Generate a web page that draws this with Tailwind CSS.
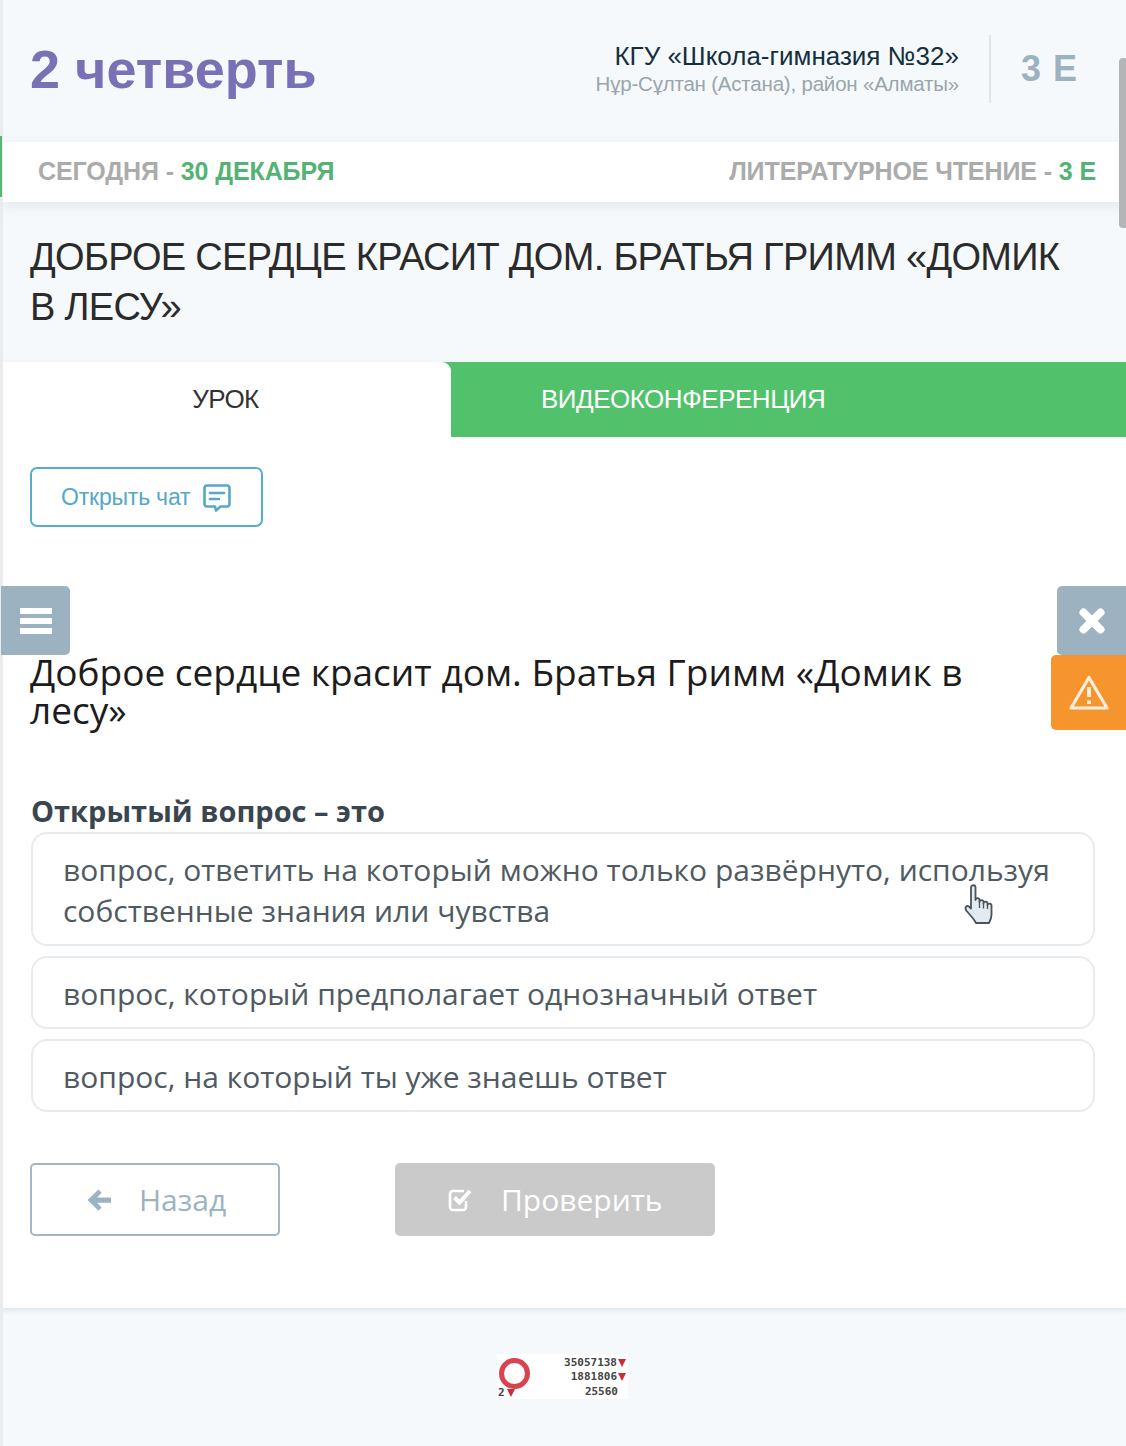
<!DOCTYPE html>
<html lang="ru">
<head>
  <meta charset="UTF-8">
  <meta name="viewport" content="width=device-width, initial-scale=1">
  <title>2 четверть</title>
  <script src="https://cdn.jsdelivr.net/npm/@tailwindcss/browser@4"></script>
</head>

<body class="bg-[#f5f9fc]">
  <div class="relative w-[1126px] h-[1446px] overflow-hidden bg-[#f5f9fc] font-['Liberation_Sans',sans-serif]">
    <!-- left edge of the page -->
    <div class="absolute left-0 top-0 bottom-0 w-[3px] bg-[#e9ebed] z-10"></div>

    <!-- header -->
    <header class="h-[142px] flex items-center justify-between pl-[30px] pr-[48px]">
      <h1 class="text-[54px] font-bold text-[#7a70b6] leading-none -mt-[4px]">2 четверть</h1>
      <div class="flex items-center -mt-[4px]">
        <div class="text-right">
          <div class="text-[26px] leading-[30px] text-[#14303c]">КГУ «Школа-гимназия №32»</div>
          <div class="text-[20.5px] leading-[26px] text-[#9aa5ab] tracking-[-0.2px]">Нұр-Сұлтан (Астана), район «Алматы»</div>
        </div>
        <div class="w-[2px] h-[68px] bg-[#dfe5e9] mx-[30px]"></div>
        <div class="text-[36px] font-bold text-[#9db2c1] tracking-[1px] pr-0">3 Е</div>
      </div>
    </header>

    <!-- date bar -->
    <div class="relative h-[60px] bg-white flex items-center justify-between pl-[38px] pr-[30px] text-[25px] font-bold text-[#ababab] shadow-[0_4px_12px_rgba(120,140,150,0.15)] tracking-[-0.1px]">
      <div class="absolute left-0 -top-[6px] h-[61px] w-[2px] bg-[#54b872] z-20"></div>
      <div>СЕГОДНЯ - <span class="text-[#54b374]">30 ДЕКАБРЯ</span></div>
      <div>ЛИТЕРАТУРНОЕ ЧТЕНИЕ - <span class="text-[#54b374]">3 Е</span></div>
    </div>

    <!-- lesson title -->
    <div class="h-[160px] pl-[30px] pr-[40px] pt-[30px]">
      <h2 class="text-[38px] leading-[50px] text-[#2b2b2b] tracking-[-0.7px]">ДОБРОЕ СЕРДЦЕ КРАСИТ ДОМ. БРАТЬЯ ГРИММ «ДОМИК В ЛЕСУ»</h2>
    </div>

    <!-- lesson card -->
    <main class="h-[946px] bg-white shadow-[0_2px_6px_rgba(120,140,150,0.2)]">
      <div class="flex h-[75px] bg-[#52c16c]">
        <div class="w-[451px] bg-white rounded-tr-[9px] flex items-center justify-center text-[26px] text-[#333] tracking-[-0.6px]">УРОК</div>
        <div class="flex-1 flex items-center pl-[90px] text-[26px] text-white tracking-[-0.5px]">ВИДЕОКОНФЕРЕНЦИЯ</div>
      </div>

      <div class="pl-[30px] pt-[30px]">
        <button class="w-[233px] h-[60px] border-2 border-[#57aecb] rounded-[7px] flex items-center pl-[29px] text-[23px] text-[#55a8c6] tracking-[-0.2px]">
          Открыть чат
          <svg class="ml-[12px] mt-[1px]" width="30" height="30" viewBox="0 0 30 30" fill="none" stroke="#55a8c6" stroke-width="2.6" stroke-linejoin="round" stroke-linecap="round">
            <path d="M5 2.5h20a2.5 2.5 0 0 1 2.5 2.5v16a2.5 2.5 0 0 1-2.5 2.5h-6.5l-4.5 4-1-4H5A2.5 2.5 0 0 1 2.5 21V5A2.5 2.5 0 0 1 5 2.5z"/>
            <path d="M8 10h14M8 16h9"/>
          </svg>
        </button>
      </div>

      <div class="font-['Open_Sans',sans-serif] pl-[30px] pr-[31px]">
        <h3 class="mt-[126px] text-[37px] leading-[38px] text-[#1c1c1c] pr-[60px]">Доброе сердце красит дом. Братья Гримм «Домик в лесу»</h3>
        <p class="mt-[62px] text-[29px] leading-[40px] font-bold text-[#3a4550] pl-[1px]">Открытый вопрос – это</p>

        <div class="mt-[1px] flex flex-col gap-[10px] pl-[1px] text-[30px] text-[#4f5a63] leading-[41px]">
          <div class="h-[114px] border-2 border-[#e8ebee] rounded-[16px] pl-[30px] pr-[30px] pt-[15px]">вопрос, ответить на который можно только развёрнуто, используя собственные знания или чувства</div>
          <div class="h-[73px] border-2 border-[#e8ebee] rounded-[16px] pl-[30px] pt-[15px]">вопрос, который предполагает однозначный ответ</div>
          <div class="h-[73px] border-2 border-[#e8ebee] rounded-[16px] pl-[30px] pt-[15px]">вопрос, на который ты уже знаешь ответ</div>
        </div>

        <div class="mt-[51px] flex text-[30px]">
          <button class="w-[250px] h-[73px] border-2 border-[#a3b6c3] rounded-[5px] flex items-center pl-[54px] text-[#9db3c1]">
            <svg width="26" height="24" viewBox="0 0 26 24" fill="#9db3c1"><path d="M12.5 1.5l3.2 3.2-4.6 4.8H25v5.2H11.1l4.6 4.8-3.2 3.2L1.5 12z"/></svg>
            <span class="ml-[27px]">Назад</span>
          </button>
          <button class="ml-[115px] w-[320px] h-[73px] bg-[#cacaca] rounded-[5px] flex items-center pl-[52px] text-white">
            <svg width="26" height="26" viewBox="0 0 26 26" fill="none" stroke="#fff" stroke-width="2.6"><path d="M19 14v6a3 3 0 0 1-3 3H6a3 3 0 0 1-3-3V7a3 3 0 0 1 3-3h11"/><path stroke-width="4" d="M7.5 10.5l5 5L23 4"/></svg>
            <span class="ml-[28px]">Проверить</span>
          </button>
        </div>
      </div>
    </main>

    <!-- counter -->
    <div class="flex justify-center mt-[46px] pr-[1px]">
      <div class="relative w-[131px] h-[45px] bg-white font-['DejaVu_Sans_Mono',monospace] text-[11px] leading-[15px] font-bold text-[#444]">
        <div class="absolute left-[2px] top-[4px] w-[31px] h-[31px] rounded-full border-[5px] border-[#d8434f]"></div>
        <div class="absolute left-[1px] bottom-[1px] flex items-center leading-none">2<span class="ml-[2px] w-0 h-0 border-x-[4px] border-x-transparent border-t-[8px] border-t-[#c92d3a]"></span></div>
        <div class="absolute right-[2px] top-[1px] flex items-center justify-end h-[15px]">35057138<span class="ml-[1px] w-0 h-0 border-x-[4px] border-x-transparent border-t-[8px] border-t-[#c92d3a]"></span></div>
        <div class="absolute right-[2px] top-[15px] flex items-center justify-end h-[15px]">1881806<span class="ml-[1px] w-0 h-0 border-x-[4px] border-x-transparent border-t-[8px] border-t-[#c92d3a]"></span></div>
        <div class="absolute right-[10px] top-[30px] h-[15px]">25560</div>
      </div>
    </div>

    <!-- floating side buttons -->
    <div class="absolute left-[1px] top-[586px] w-[69px] h-[69px] bg-[#9cb2c1] rounded-r-[5px] flex items-center justify-center z-20">
      <svg width="32" height="26" viewBox="0 0 32 26" fill="#fff"><rect y="0" width="32" height="6" rx="0.5"/><rect y="10" width="32" height="6" rx="0.5"/><rect y="20" width="32" height="6" rx="0.5"/></svg>
    </div>
    <div class="absolute right-0 top-[586px] w-[69px] h-[69px] bg-[#9cb2c1] rounded-l-[5px] flex items-center justify-center z-20">
      <svg width="26" height="26" viewBox="0 0 26 26" fill="none" stroke="#fff" stroke-width="8" stroke-linecap="round"><path d="M4.5 4.5l17 17M21.5 4.5l-17 17"/></svg>
    </div>
    <div class="absolute right-0 top-[655px] w-[75px] h-[75px] bg-[#f6952d] rounded-l-[5px] flex items-center justify-center z-20">
      <svg width="40" height="36" viewBox="0 0 40 36" fill="none" stroke="#ffeedd" stroke-width="3.2" stroke-linejoin="round"><path d="M20 2.5L38 33H2z"/><path stroke-width="4" d="M20 12v10"/><path stroke-width="4" d="M20 25.500v3.500"/></svg>
    </div>

    <!-- hand cursor over the first answer -->
    <svg class="absolute left-[963px] top-[883px] z-20" width="32" height="44" viewBox="0 0 32 44">
      <path d="M8 4.500c0-3 4.500-3 4.500 0V17c0-2.500 4-2.500 4 0v2c0-2.500 4-2.500 4 0v1.500c0-2.500 4-2.500 4 0V22c0-2 4-2 4 .5V32c0 3-1 5-2.500 8H13c-2-4-5-7-9-11.500-3-3.500-1-6.500 2-5l2 2z" fill="#e4ebf0" stroke="#4b5358" stroke-width="1.800" stroke-linejoin="round"/>
      <path d="M16.500 19v6M20.500 20.500v5M24.500 22v4" stroke="#4b5358" stroke-width="1.300" fill="none"/>
    </svg>

    <!-- scrollbar -->
    <div class="absolute right-0 top-[58px] w-[7px] h-[170px] bg-[#b3b5b6] rounded-l-[4px] z-20"></div>
  </div>
</body>
</html>
